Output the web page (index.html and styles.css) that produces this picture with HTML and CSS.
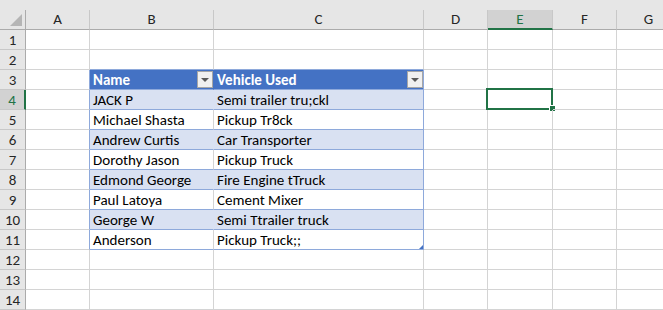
FILE: index.html
```html
<!DOCTYPE html>
<html>
<head>
<meta charset="utf-8">
<link rel="stylesheet" href="styles.css">
</head>
<body>
<div class="topstrip"></div>
<div class="sheet">
  <div class="corner"><span class="tri"></span></div>
  <div class="ch">A</div><div class="ch">B</div><div class="ch">C</div><div class="ch">D</div><div class="ch sel">E</div><div class="ch">F</div><div class="ch">G</div>

  <div class="rh">1</div><div class="c"></div><div class="c"></div><div class="c"></div><div class="c"></div><div class="c"></div><div class="c"></div><div class="c"></div>
  <div class="rh">2</div><div class="c"></div><div class="c ab"></div><div class="c ab"></div><div class="c"></div><div class="c"></div><div class="c"></div><div class="c"></div>

  <div class="rh">3</div><div class="c al"></div>
  <div class="c th tl">Name<span class="dd"><span class="arr"></span></span></div>
  <div class="c th tr">Vehicle Used<span class="dd"><span class="arr"></span></span></div>
  <div class="c"></div><div class="c"></div><div class="c"></div><div class="c"></div>

  <div class="rh sel">4</div><div class="c al"></div><div class="c band tl">JACK P</div><div class="c band tr">Semi trailer tru;ckl</div><div class="c"></div><div class="c active"><span class="selbox"></span><span class="handle"></span></div><div class="c"></div><div class="c"></div>
  <div class="rh">5</div><div class="c al"></div><div class="c plain tl">Michael Shasta</div><div class="c plain tr">Pickup Tr8ck</div><div class="c"></div><div class="c"></div><div class="c"></div><div class="c"></div>
  <div class="rh">6</div><div class="c al"></div><div class="c band tl">Andrew Curtis</div><div class="c band tr">Car Transporter</div><div class="c"></div><div class="c"></div><div class="c"></div><div class="c"></div>
  <div class="rh">7</div><div class="c al"></div><div class="c plain tl">Dorothy Jason</div><div class="c plain tr">Pickup Truck</div><div class="c"></div><div class="c"></div><div class="c"></div><div class="c"></div>
  <div class="rh">8</div><div class="c al"></div><div class="c band tl">Edmond George</div><div class="c band tr">Fire Engine tTruck</div><div class="c"></div><div class="c"></div><div class="c"></div><div class="c"></div>
  <div class="rh">9</div><div class="c al"></div><div class="c plain tl">Paul Latoya</div><div class="c plain tr">Cement Mixer</div><div class="c"></div><div class="c"></div><div class="c"></div><div class="c"></div>
  <div class="rh">10</div><div class="c al"></div><div class="c band tl">George W</div><div class="c band tr">Semi Ttrailer truck</div><div class="c"></div><div class="c"></div><div class="c"></div><div class="c"></div>
  <div class="rh">11</div><div class="c al"></div><div class="c plain tl">Anderson</div><div class="c plain tr last">Pickup Truck;;<span class="resize"></span></div><div class="c"></div><div class="c"></div><div class="c"></div><div class="c"></div>

  <div class="rh">12</div><div class="c"></div><div class="c"></div><div class="c"></div><div class="c"></div><div class="c"></div><div class="c"></div><div class="c"></div>
  <div class="rh">13</div><div class="c"></div><div class="c"></div><div class="c"></div><div class="c"></div><div class="c"></div><div class="c"></div><div class="c"></div>
  <div class="rh">14</div><div class="c"></div><div class="c"></div><div class="c"></div><div class="c"></div><div class="c"></div><div class="c"></div><div class="c"></div>
</div>
</body>
</html>
```

FILE: styles.css
```css
html, body {
  margin: 0;
  padding: 0;
  background: #ffffff;
  overflow: hidden;
  width: 663px;
  height: 310px;
}

body {
  font-family: "Carlito", "Lato", "Open Sans", sans-serif;
  font-size: 15px;
  color: #000000;
}

.topstrip {
  height: 10px;
  background: #e6e6e6;
}

.sheet {
  display: grid;
  grid-template-columns: 26px 64px 124px 210px 64px 65px 64px 64px;
  grid-template-rows: 20px repeat(14, 20px);
  width: 681px;
}

.sheet > div {
  box-sizing: border-box;
  position: relative;
  overflow: visible;
  white-space: nowrap;
}

.corner {
  background: #e6e6e6;
  border-right: 1px solid #ababab;
  border-bottom: 1px solid #ababab;
}

.corner .tri {
  position: absolute;
  right: 3px;
  bottom: 3px;
  width: 0;
  height: 0;
  border-left: 12px solid transparent;
  border-bottom: 12px solid #b5b5b5;
}

.ch {
  background: #e6e6e6;
  border-right: 1px solid #c8c8c8;
  border-bottom: 1px solid #ababab;
  text-align: center;
  line-height: 19px;
  font-size: 15px;
  color: #262626;
}

.ch.sel {
  background: #d2d2d2;
  color: #217346;
  border-bottom: 2px solid #217346;
}

.rh {
  background: #e6e6e6;
  border-right: 1px solid #ababab;
  border-bottom: 1px solid #c8c8c8;
  text-align: center;
  line-height: 21px;
  font-size: 15px;
  color: #262626;
}

.rh.sel {
  background: #d2d2d2;
  color: #217346;
  border-right: 2px solid #217346;
}

.c {
  border-right: 1px solid #d4d4d4;
  border-bottom: 1px solid #d4d4d4;
  padding-left: 3px;
  line-height: 21px;
}

.c.ab {
  border-bottom-color: #8ea9db;
}

.c.al {
  border-right-color: #8ea9db;
}

.th {
  background: #4472c4;
  color: #ffffff;
  font-weight: bold;
  border-bottom-color: #8ea9db;
}

.th.tl {
  border-right-color: #4472c4;
}

.th.tr {
  border-right-color: #8ea9db;
}

.band {
  background: #d9e1f2;
  border-bottom-color: #8ea9db;
}

.band.tl {
  border-right-color: #d9e1f2;
}

.plain {
  border-bottom-color: #8ea9db;
}

.tr {
  border-right-color: #8ea9db !important;
}

.dd {
  position: absolute;
  right: 0;
  top: 1px;
  width: 16px;
  height: 17px;
  box-sizing: border-box;
  background: #f0f0f0;
  border: 1px solid #a6a6a6;
}

.arr {
  position: absolute;
  left: 3px;
  top: 6px;
  width: 0;
  height: 0;
  border-left: 4px solid transparent;
  border-right: 4px solid transparent;
  border-top: 4px solid #595959;
}

.selbox {
  position: absolute;
  left: -2px;
  top: -2px;
  right: -1px;
  bottom: -1px;
  border: 2px solid #217346;
}

.handle {
  position: absolute;
  right: -4px;
  bottom: -3px;
  width: 5px;
  height: 5px;
  background: #217346;
  border: 1px solid #ffffff;
  box-sizing: content-box;
}

.resize {
  position: absolute;
  right: 0;
  bottom: 0;
  width: 0;
  height: 0;
  border-left: 4px solid transparent;
  border-bottom: 4px solid #4472c4;
}
```
